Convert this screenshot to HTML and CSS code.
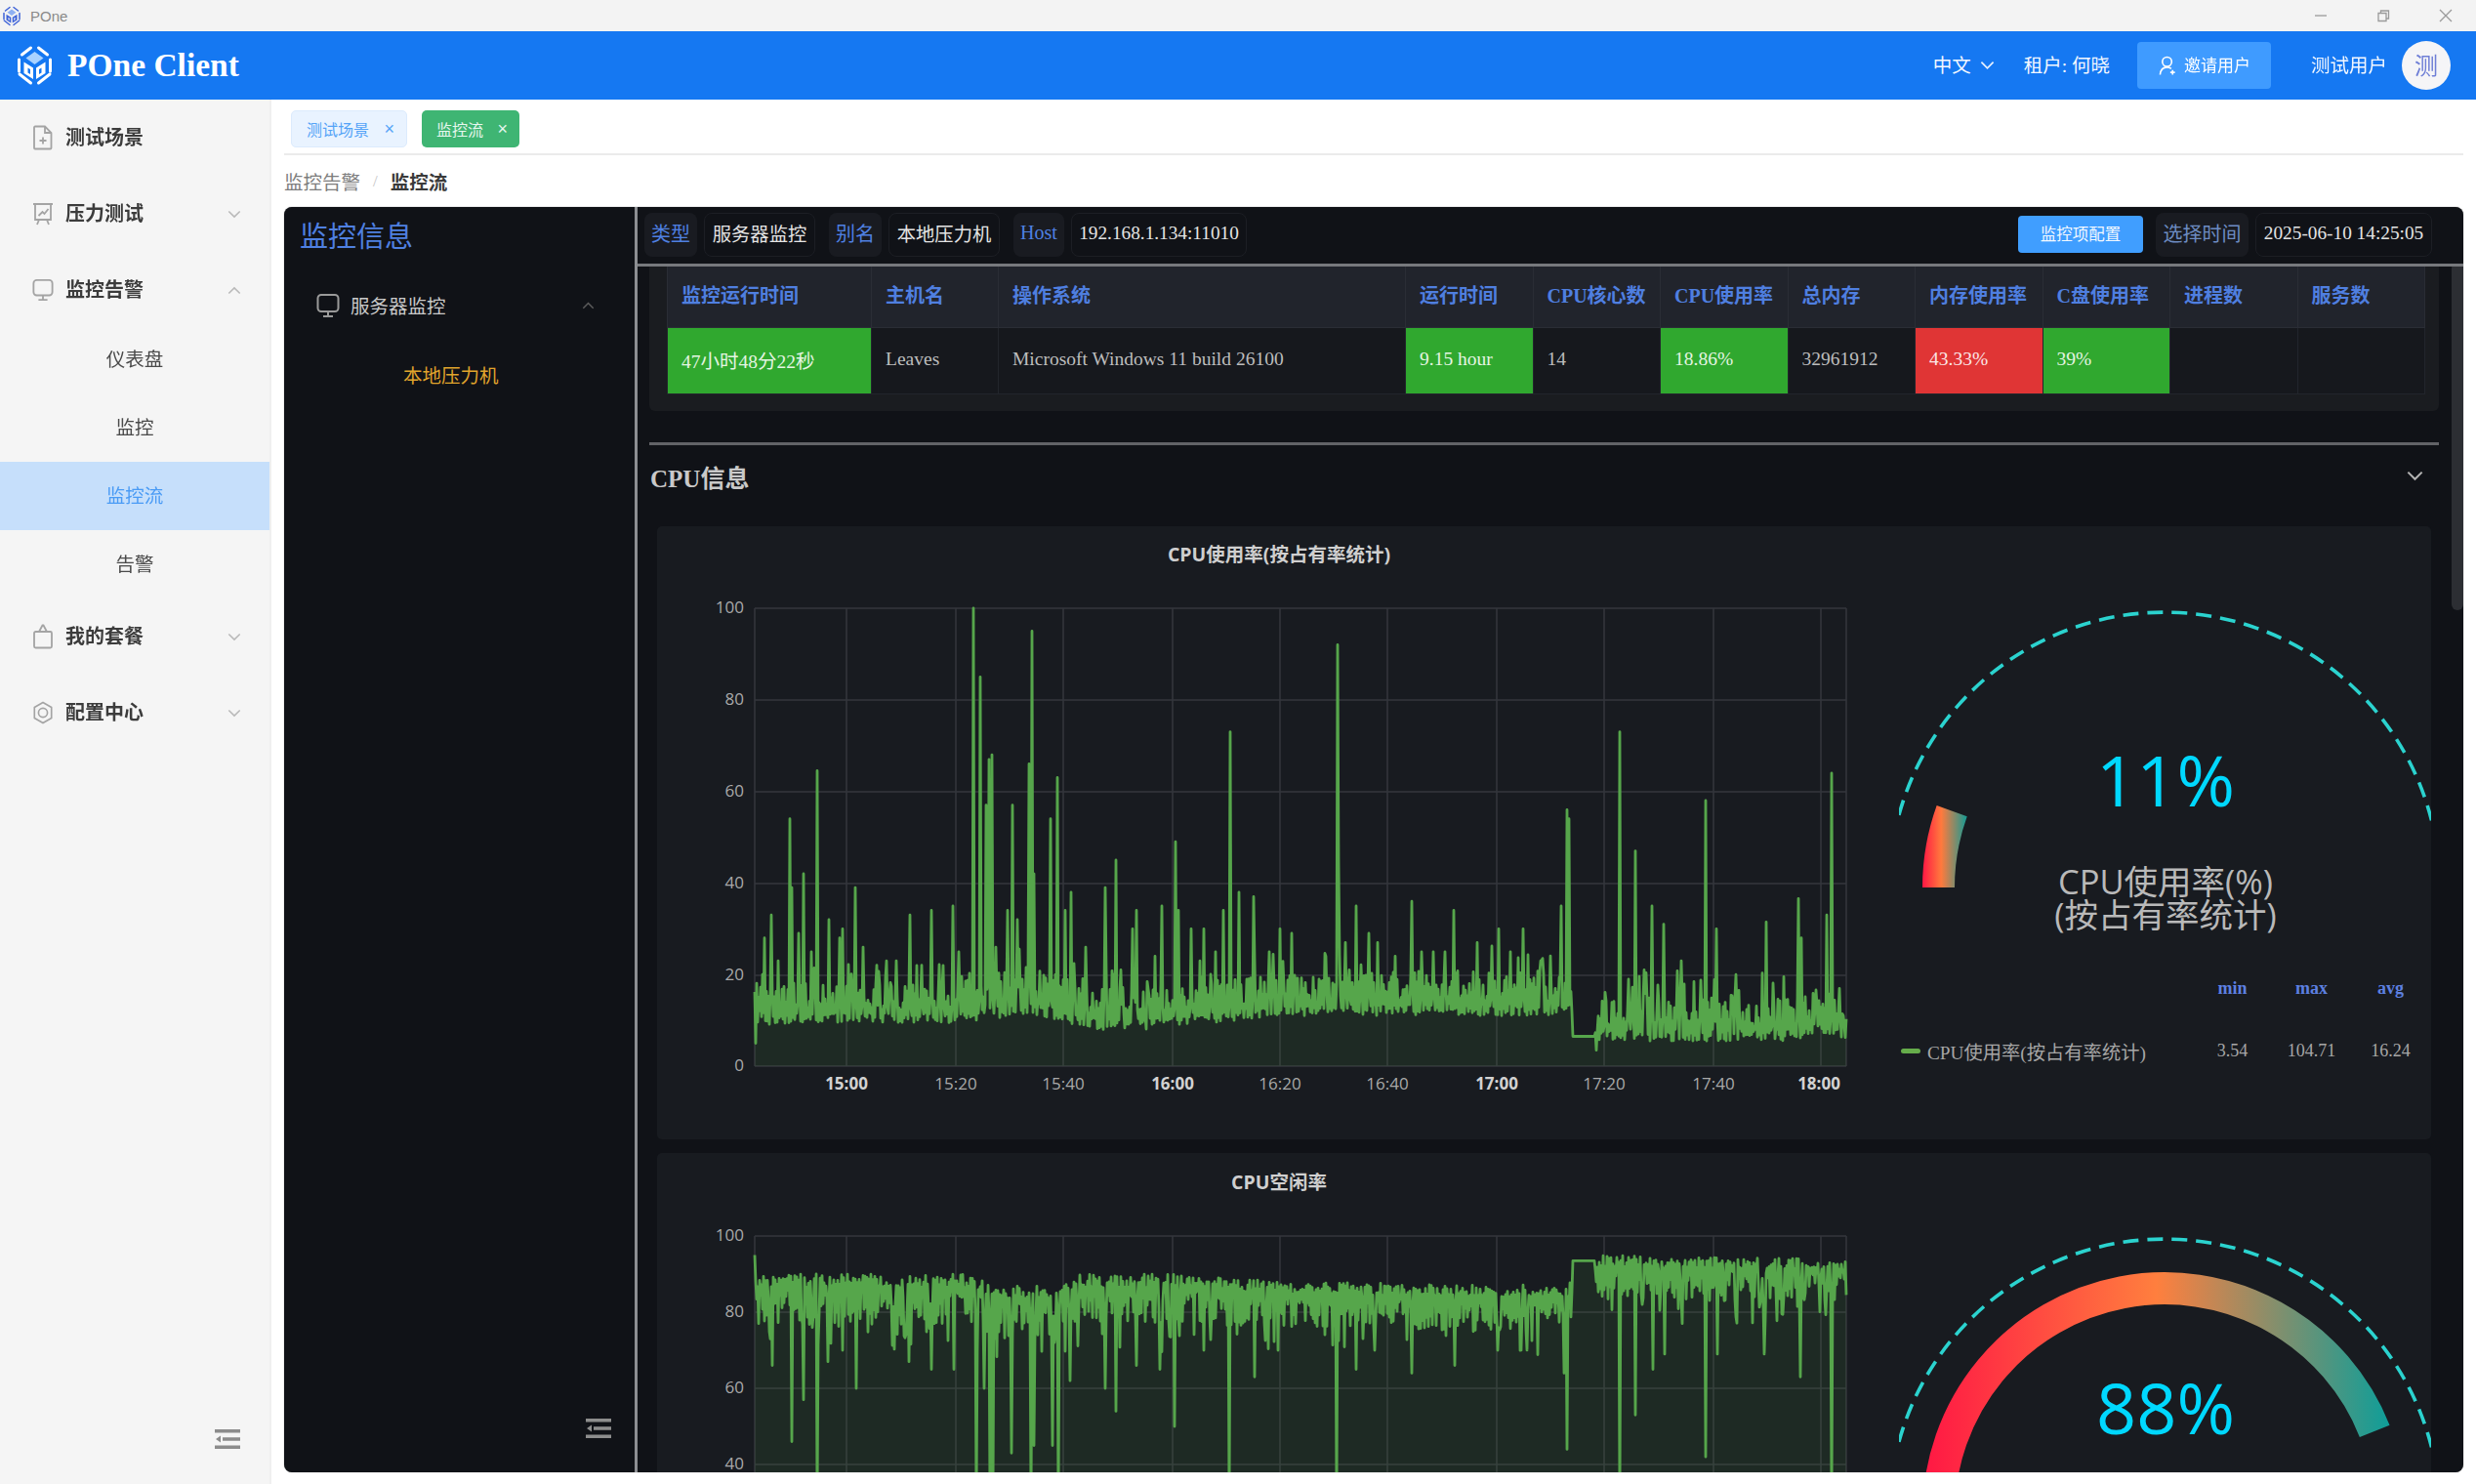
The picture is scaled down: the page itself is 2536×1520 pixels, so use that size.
FILE: index.html
```html
<!DOCTYPE html>
<html lang="zh">
<head>
<meta charset="utf-8">
<title>POne</title>
<link rel="stylesheet" href="styles.css">
</head>
<body>
<svg class="defs" width="0" height="0" aria-hidden="true">
  <defs>
    <symbol id="logo" viewBox="0 0 40 42">
      <g fill="none" stroke="currentColor" stroke-width="3" stroke-linecap="round">
        <path d="M4 27V15M4.500 30L16 39M36 27V15M35.500 30L24 39M7 10L16 3M33 10L24 3"/>
      </g>
      <path class="logo-gem" d="M20 7L29 13.500L20 20L11 13.500Z"/>
      <path fill="currentColor" d="M9 17.500L18.500 23.500V35L9 29ZM31 17.500L21.500 23.500V35L31 29Z"/>
      <path class="logo-cut" d="M13 23.500L15.500 25V30L13 28.500ZM27 23.500L24.500 25V30L27 28.500Z"/>
    </symbol>
    <symbol id="chev-down" viewBox="0 0 16 10"><path d="M1.500 1.500L8 8L14.500 1.500" fill="none" stroke="currentColor" stroke-width="1.800"/></symbol>
    <symbol id="chev-up" viewBox="0 0 16 10"><path d="M1.500 8.500L8 2L14.500 8.500" fill="none" stroke="currentColor" stroke-width="1.800"/></symbol>
    <symbol id="monitor" viewBox="0 0 24 26"><g fill="none" stroke="currentColor" stroke-width="2"><rect x="1.500" y="2" width="21" height="17" rx="3.500"/><path d="M12 19v4M7 24h10"/></g></symbol>
    <symbol id="collapse" viewBox="0 0 26 20"><path fill="currentColor" d="M0 0h26v3.500H0zM0 16.500h26V20H0zM8 8.200h18v3.600H8zM1 10l5-3.500v7z"/></symbol>
    <linearGradient id="grad-short" gradientUnits="userSpaceOnUse" x1="24" y1="0" x2="70" y2="0">
      <stop offset="0" stop-color="#ff1744"/><stop offset=".42" stop-color="#ff7a3d"/><stop offset="1" stop-color="#109c96"/>
    </linearGradient>
    <linearGradient id="grad-long" gradientUnits="userSpaceOnUse" x1="24" y1="0" x2="504" y2="0">
      <stop offset="0" stop-color="#ff1744"/><stop offset=".5" stop-color="#ff7f3e"/><stop offset="1" stop-color="#0d9e99"/>
    </linearGradient>
  </defs>
</svg>

<div class="app">
  <div class="titlebar">
    <svg class="tb-logo"><use href="#logo"/></svg>
    <span class="tb-name">POne</span>
    <div class="win-controls">
      <svg class="win-btn" viewBox="0 0 14 14"><path d="M1 7h12"/></svg>
      <svg class="win-btn" viewBox="0 0 14 14"><path d="M2 4.500h8v8H2zM4.500 4.500V2h8v8H10"/></svg>
      <svg class="win-btn" viewBox="0 0 14 14"><path d="M1 1l12 12M13 1L1 13"/></svg>
    </div>
  </div>

  <header class="topnav">
    <svg class="nav-logo"><use href="#logo"/></svg>
    <span class="brand">POne Client</span>
    <div class="nav-right">
      <span class="lang">中文</span>
      <svg class="nav-chev"><use href="#chev-down"/></svg>
      <span class="tenant">租户: 何晓</span>
      <button class="invite">
        <svg class="invite-ico" viewBox="0 0 20 22"><g fill="none" stroke="currentColor" stroke-width="1.700"><circle cx="9" cy="7" r="5"/><path d="M1.500 21c.5-5 3-8 7.500-8 2 0 3.500.5 4.500 1.500M15 16v5M12.500 18.500h5"/></g></svg>
        <span class="invite-text">邀请用户</span>
      </button>
      <span class="username">测试用户</span>
      <span class="avatar">测</span>
    </div>
  </header>

  <div class="body-row">
    <aside class="sidebar">
      <nav class="menu">
        <div class="menu-item">
          <svg class="menu-ico" viewBox="0 0 22 26"><g fill="none" stroke="currentColor" stroke-width="1.800"><path d="M3 1.500h10l6.500 6.500v15.500a1 1 0 0 1-1 1H3a1 1 0 0 1-1-1v-21a1 1 0 0 1 1-1z"/><path d="M13 1.500V8h6.500M11 12.500v7M7.500 16h7"/></g></svg>
          <span>测试场景</span>
        </div>
        <div class="menu-item">
          <svg class="menu-ico" viewBox="0 0 22 26"><g fill="none" stroke="currentColor" stroke-width="1.800"><path d="M1 3h20M3 3v16h16V3M7 19l-2 5M15 19l2 5M6.500 15l4-4 2 2 4-5"/></g></svg>
          <span>压力测试</span>
          <svg class="menu-chev"><use href="#chev-down"/></svg>
        </div>
        <div class="menu-item">
          <svg class="menu-ico"><use href="#monitor"/></svg>
          <span>监控告警</span>
          <svg class="menu-chev"><use href="#chev-up"/></svg>
        </div>
        <div class="submenu">
          <div class="sub-item">仪表盘</div>
          <div class="sub-item">监控</div>
          <div class="sub-item active">监控流</div>
          <div class="sub-item">告警</div>
        </div>
        <div class="menu-item">
          <svg class="menu-ico" viewBox="0 0 22 26"><g fill="none" stroke="currentColor" stroke-width="1.800"><rect x="2" y="8" width="18" height="16.500" rx="1.500"/><path d="M7 8l3.500-6.500h1L15 8"/></g></svg>
          <span>我的套餐</span>
          <svg class="menu-chev"><use href="#chev-down"/></svg>
        </div>
        <div class="menu-item">
          <svg class="menu-ico" viewBox="0 0 24 26"><g fill="none" stroke="currentColor" stroke-width="1.800" stroke-linejoin="round"><path d="M12 1.500l9.500 5.500v12L12 24.500 2.500 19V7z"/><circle cx="12" cy="13" r="5"/></g></svg>
          <span>配置中心</span>
          <svg class="menu-chev"><use href="#chev-down"/></svg>
        </div>
      </nav>
      <svg class="side-collapse"><use href="#collapse"/></svg>
    </aside>

    <main class="content">
      <div class="tabs">
        <span class="tab tab-idle">测试场景<i class="tab-x">×</i></span>
        <span class="tab tab-on">监控流<i class="tab-x">×</i></span>
      </div>
      <div class="crumbs">
        <span class="crumb">监控告警</span>
        <span class="crumb-sep">/</span>
        <span class="crumb-cur">监控流</span>
      </div>

      <section class="panel">
        <div class="panel-left">
          <h2 class="pl-title">监控信息</h2>
          <div class="pl-group">
            <svg class="pl-ico"><use href="#monitor"/></svg>
            <span>服务器监控</span>
            <svg class="pl-chev"><use href="#chev-up"/></svg>
          </div>
          <div class="pl-sub">本地压力机</div>
          <svg class="pl-collapse"><use href="#collapse"/></svg>
        </div>

        <div class="panel-right">
          <div class="infobar">
            <span class="pill pill-label pw-54">类型</span>
            <span class="pill pill-value pw-114">服务器监控</span>
            <span class="pill pill-label pw-54 pill-next">别名</span>
            <span class="pill pill-value pw-114">本地压力机</span>
            <span class="pill pill-label pw-52 pill-next">Host</span>
            <span class="pill pill-value pw-180">192.168.1.134:11010</span>
            <div class="infobar-right">
              <button class="cfg-btn">监控项配置</button>
              <span class="pill pill-label pw-95 pill-dim">选择时间</span>
              <span class="pill pill-value pw-181">2025-06-10 14:25:05</span>
            </div>
          </div>

          <div class="scroll">
            <div class="table-card">
              <table class="stats">
                <colgroup>
                  <col class="c1"><col class="c2"><col class="c3">
                  <col class="cn"><col class="cn"><col class="cn"><col class="cn">
                  <col class="cn"><col class="cn"><col class="cn"><col class="cn">
                </colgroup>
                <thead>
                  <tr>
                    <th>监控运行时间</th><th>主机名</th><th>操作系统</th><th>运行时间</th><th>CPU核心数</th>
                    <th>CPU使用率</th><th>总内存</th><th>内存使用率</th><th>C盘使用率</th><th>进程数</th><th>服务数</th>
                  </tr>
                </thead>
                <tbody>
                  <tr>
                    <td class="ok">47小时48分22秒</td><td>Leaves</td><td>Microsoft Windows 11 build 26100</td>
                    <td class="ok">9.15 hour</td><td>14</td><td class="ok">18.86%</td><td>32961912</td>
                    <td class="bad">43.33%</td><td class="ok">39%</td><td></td><td></td>
                  </tr>
                </tbody>
              </table>
            </div>

            <div class="rule"></div>
            <div class="section-head">
              <h3>CPU信息</h3>
              <svg class="section-chev"><use href="#chev-down"/></svg>
            </div>

            <article class="chart-card">
              <svg class="chart" viewBox="0 0 1272 628">
                <text class="ctitle" x="637" y="36">CPU使用率(按占有率统计)</text>
                <path class="grid" d="M100 84H1218M100 178H1218M100 272H1218M100 366H1218M100 460H1218M100 553H1218M100 84V553M194 84V553M306 84V553M416 84V553M528 84V553M638 84V553M748 84V553M860 84V553M970 84V553M1082 84V553M1192 84V553M1218 84V553"/>
                <path class="area" id="area-usage"/>
                <path class="line" id="line-usage"/>
                <text class="ylab" x="89" y="89">100</text>
                <text class="ylab" x="89" y="183">80</text>
                <text class="ylab" x="89" y="277">60</text>
                <text class="ylab" x="89" y="371">40</text>
                <text class="ylab" x="89" y="465">20</text>
                <text class="ylab" x="89" y="558">0</text>
                <text class="xlab strong" x="194" y="577">15:00</text>
                <text class="xlab" x="306" y="577">15:20</text>
                <text class="xlab" x="416" y="577">15:40</text>
                <text class="xlab strong" x="528" y="577">16:00</text>
                <text class="xlab" x="638" y="577">16:20</text>
                <text class="xlab" x="748" y="577">16:40</text>
                <text class="xlab strong" x="860" y="577">17:00</text>
                <text class="xlab" x="970" y="577">17:20</text>
                <text class="xlab" x="1082" y="577">17:40</text>
                <text class="xlab strong" x="1190" y="577">18:00</text>
              </svg>
              <div class="gauge-col">
                <svg class="gauge" viewBox="0 0 545 450">
                  <path class="dash" d="M-10 370A282 282 0 0 1 554 370"/>
                  <path class="band band-short" d="M40.500 370A231.500 231.500 0 0 1 54.200 291.600"/>
                  <text class="gauge-val" x="273" y="287">11%</text>
                  <text class="gauge-lab"><tspan x="273" y="377">CPU使用率(%)</tspan><tspan x="273" y="411">(按占有率统计)</tspan></text>
                </svg>
                <div class="legend">
                  <span></span><b>min</b><b>max</b><b>avg</b>
                  <span class="legend-name"><i class="swatch"></i>CPU使用率(按占有率统计)</span><span>3.54</span><span>104.71</span><span>16.24</span>
                </div>
              </div>
            </article>

            <article class="chart-card">
              <svg class="chart" viewBox="0 0 1272 628">
                <text class="ctitle" x="637" y="37">CPU空闲率</text>
                <path class="grid" d="M100 85H1218M100 163H1218M100 241H1218M100 319H1218M100 397H1218M100 475H1218M100 553H1218M100 85V553M194 85V553M306 85V553M416 85V553M528 85V553M638 85V553M748 85V553M860 85V553M970 85V553M1082 85V553M1192 85V553M1218 85V553"/>
                <path class="area" id="area-idle"/>
                <path class="line" id="line-idle"/>
                <text class="ylab" x="89" y="90">100</text>
                <text class="ylab" x="89" y="168">80</text>
                <text class="ylab" x="89" y="246">60</text>
                <text class="ylab" x="89" y="324">40</text>
              </svg>
              <div class="gauge-col">
                <svg class="gauge" viewBox="0 0 545 450">
                  <path class="dash" d="M-10 370A282 282 0 0 1 554 370"/>
                  <path class="band band-long" d="M40.500 370A231.500 231.500 0 0 1 487.200 284.800"/>
                  <text class="gauge-val" x="273" y="288">88%</text>
                </svg>
              </div>
            </article>

            <div class="scroll-thumb"></div>
          </div>
        </div>
      </section>
    </main>
  </div>
</div>
<script src="chart.js"></script>
</body>
</html>
```
FILE: styles.css
```css
* { box-sizing: border-box; }
html, body { margin: 0; height: 100%; overflow: hidden; background: #fff; }
body { font-family: "Liberation Serif", "Noto Sans CJK SC", serif; color: #333; }
.defs { position: absolute; }

.app { height: 100vh; display: flex; flex-direction: column; filter: blur(.7px); }

/* title bar */
.titlebar { height: 32px; flex: none; display: flex; align-items: center; background: #f3f3f3; padding: 0 24px 0 2px; }
.tb-logo { width: 20px; height: 21px; color: #3f63d8; --gem: #8fb0f2; --cut: #f3f3f3; }
.tb-name { margin-left: 9px; font: 15px "Liberation Sans", sans-serif; color: #8a8a8a; }
.win-controls { margin-left: auto; display: flex; gap: 50px; }
.win-btn { width: 14px; height: 14px; fill: none; stroke: #9a9a9a; stroke-width: 1.300; }

/* top navigation */
.topnav { height: 70px; flex: none; display: flex; align-items: center; background: #1578f2; color: #fff; padding: 0 26px 0 15px; }
.nav-logo { width: 41px; height: 42px; color: #fff; --gem: #a9d2ff; --cut: #1578f2; }
.logo-gem { fill: var(--gem); }
.logo-cut { fill: var(--cut); }
.brand { margin-left: 13px; font-size: 33.500px; font-weight: 700; }
.nav-right { margin-left: auto; display: flex; align-items: center; }
.lang, .tenant, .username { font-size: 19.500px; color: #f2f7ff; padding-bottom: 3px; }
.nav-chev { width: 15px; height: 10px; margin-left: 9px; color: #e6f0ff; }
.tenant { margin-left: 30px; }
.invite { margin-left: 28.500px; width: 137px; height: 48px; border: 0; border-radius: 4px; background: #3f9bff; color: #fff; display: flex; align-items: center; justify-content: center; gap: 7px; font: 17px "Liberation Serif", "Noto Sans CJK SC", serif; padding: 0; }
.invite-text { padding-bottom: 3px; }
.invite-ico { width: 19px; height: 22px; }
.username { margin-left: 40.500px; }
.avatar { margin-left: 15px; width: 50px; height: 50px; border-radius: 50%; background: #f5f5f7; color: #6f7fd6; display: flex; align-items: center; justify-content: center; font-size: 24px; padding-bottom: 3px; }

.body-row { flex: 1; min-height: 0; display: flex; }

/* sidebar */
.sidebar { width: 278px; flex: none; display: flex; flex-direction: column; background: #f5f5f5; border-right: 2px solid #efefef; }
.menu { display: flex; flex-direction: column; }
.menu-item { height: 78px; display: flex; align-items: center; padding: 0 29px 0 33px; font-size: 20px; font-weight: 700; color: #3c3c3c; }
.menu-item span { padding-bottom: 3px; }
.menu-ico { width: 22px; height: 26px; margin-right: 12px; color: #a4a4a4; }
.menu-chev { width: 14px; height: 9px; margin-left: auto; color: #b9b9b9; }
.submenu { margin-top: -3px; }
.sub-item { height: 70px; display: flex; align-items: center; justify-content: center; font-size: 19.500px; color: #4a4a4a; padding-bottom: 3px; }
.sub-item.active { background: #c6dffb; color: #4a9bf5; }
.side-collapse { width: 26px; height: 20px; margin: auto 30px 36px auto; color: #8c8c8c; }

/* content */
.content { flex: 1; min-width: 0; display: flex; flex-direction: column; padding: 0 13px 12px 13px; background: #fff; }
.tabs { height: 57px; flex: none; display: flex; gap: 15px; padding: 11px 0 0 7px; border-bottom: 2px solid #ebebeb; }
.tab { height: 38px; display: flex; align-items: center; padding: 0 12px 0 15px; border-radius: 5px; font-size: 16px; }
.tab-idle { width: 119px; background: #e9f3ff; border: 1px solid #dcebfd; color: #54a3f7; }
.tab-on { width: 100px; background: #3fb573; color: #e6f7ee; }
.tab-x { margin-left: auto; font-style: normal; font-size: 18px; font-family: "Liberation Sans", sans-serif; }
.crumbs { height: 53px; flex: none; display: flex; align-items: center; font-size: 19.500px; }
.crumb { color: #7d7d7d; }
.crumb-sep { margin: 0 13px; color: #c6c6c6; font-size: 17px; }
.crumb-cur { font-weight: 700; color: #3a3a3a; }

/* dark panel */
.panel { flex: 1; min-height: 0; display: flex; background: #101217; border-radius: 8px; overflow: hidden; box-shadow: 0 0 1px #555; }
.panel-left { width: 359px; flex: none; display: flex; flex-direction: column; }
.pl-title { margin: 0; height: 66px; padding: 17px 0 0 16px; font-size: 29px; line-height: 29px; font-weight: 400; color: #4f80e1; }
.pl-group { height: 72px; display: flex; align-items: center; padding: 0 41px 3px 33px; font-size: 19.500px; color: #c9c9c9; }
.pl-ico { width: 24px; height: 26px; margin-right: 11px; color: #9a9a9a; }
.pl-chev { width: 13px; height: 8px; margin-left: auto; color: #5c5c5c; }
.pl-sub { height: 72px; display: flex; align-items: center; padding: 0 0 5px 122px; font-size: 19.500px; color: #e0a42c; }
.pl-collapse { width: 26px; height: 22px; margin: auto 24px 34px auto; color: #8d8d8d; }

.panel-right { flex: 1; min-width: 0; display: flex; flex-direction: column; border-left: 3px solid #8c8e92; }
.infobar { height: 61px; flex: none; display: flex; align-items: center; padding: 0 32px 2px 7px; border-bottom: 3px solid #77797d; gap: 7px; }
.pill { height: 45px; display: flex; align-items: center; justify-content: center; border-radius: 8px; font-size: 19.500px; white-space: nowrap; padding-bottom: 3px; }
.pill-label { background: #191b21; color: #4f80e1; font-size: 20px; }
.pill-value { border: 1px solid #1c1e24; color: #e4e4e4; font-size: 19.300px; }
.pill-next { margin-left: 7px; }
.pill-dim { color: #6d8cc2; }
.pw-52 { width: 52px; }
.pw-54 { width: 54px; }
.pw-95 { width: 95px; }
.pw-114 { width: 114px; }
.pw-180 { width: 180px; }
.pw-181 { width: 181px; }
.infobar-right { margin-left: auto; display: flex; align-items: center; gap: 7px; }
.cfg-btn { width: 128px; height: 38px; margin-right: 6px; border: 0; border-radius: 4px; background: #409eff; color: #f2f8ff; font: 16.500px "Liberation Serif", "Noto Sans CJK SC", serif; padding: 0 0 2px; }

.scroll { flex: 1; min-height: 0; position: relative; overflow: hidden; padding: 0 25px 0 12px; }
.scroll-thumb { position: absolute; top: -4px; right: 0; width: 12px; height: 356px; border-radius: 6px; background: #2c2e33; }

.table-card { background: #1a1c20; border-radius: 0 0 6px 6px; padding: 0 15px 17px 18px; }
.stats { width: 1800px; table-layout: fixed; border-collapse: collapse; font-size: 19.500px; }
.c1 { width: 209px; }
.c2 { width: 130px; }
.c3 { width: 417px; }
.cn { width: 130.500px; }
.stats th { height: 62px; padding: 0 14px 5px; text-align: left; font-size: 20px; font-weight: 700; white-space: nowrap; color: #4f7fe0; background: #21242c; border: 1px solid #2a2d35; border-top: 0; }
.stats td { height: 68px; padding: 0 14px 2px; color: #bdbdbd; background: #16181d; border: 1px solid #22252c; white-space: nowrap; }
.stats td.ok { background: #30a82f; color: #e4f5e2; }
.stats td.bad { background: #e03535; color: #fbe6e6; }

.rule { height: 3px; margin-top: 32px; background: #626367; }
.section-head { height: 64px; margin-bottom: 19px; display: flex; align-items: center; justify-content: space-between; padding: 0 15px 0 1px; }
.section-head h3 { margin: 0; font-size: 25px; font-weight: 700; color: #c9c9c9; }
.section-chev { width: 19px; height: 11px; color: #b4b4b4; }

/* chart cards */
.chart-card { display: flex; height: 628px; margin: 0 8px 14px; background: #181b20; border-radius: 5px; overflow: hidden; }
.chart { width: 1272px; height: 628px; flex: none; }
.ctitle { font: 700 19.500px "Open Sans", "Noto Sans CJK SC", sans-serif; fill: #cfcfcf; text-anchor: middle; }
.grid { fill: none; stroke: #34373c; stroke-width: 1.500; }
.area { fill: #56a64b; fill-opacity: .11; stroke: none; }
.line { fill: none; stroke: #56a64b; stroke-width: 2.800; stroke-linejoin: round; }
.ylab { font: 17px "Open Sans", sans-serif; fill: #a9a9a9; text-anchor: end; }
.xlab { font: 17px "Open Sans", sans-serif; fill: #a9a9a9; text-anchor: middle; }
.xlab.strong { font-weight: 700; fill: #d2d2d2; }

.gauge-col { width: 545px; flex: none; display: flex; flex-direction: column; }
.gauge { width: 545px; height: 450px; flex: none; }
.dash { fill: none; stroke: #2bd3cf; stroke-width: 3.600; stroke-dasharray: 16 9; }
.band { fill: none; stroke-width: 33; }
.band-short { stroke: url(#grad-short); }
.band-long { stroke: url(#grad-long); }
.gauge-val { font: 72px "Open Sans", sans-serif; fill: #00d8ff; text-anchor: middle; }
.gauge-lab { font: 34.500px "Open Sans", "Noto Sans CJK SC", sans-serif; fill: #b9b9b9; text-anchor: middle; }

.legend { display: grid; grid-template-columns: 301px 81px 81px 81px; grid-auto-rows: 44px; row-gap: 20px; margin-top: 2px; align-items: center; justify-items: center; font-size: 18px; color: #a6a6a6; }
.legend b { color: #5d80e0; }
.legend-name { justify-self: start; display: flex; align-items: center; white-space: nowrap; font-size: 19.300px; padding-left: 2px; }
.swatch { width: 20px; height: 5px; border-radius: 3px; background: #66ad4b; margin-right: 7px; }
```
FILE: chart.js
```js
(function () {
  function rng(seed) {
    return function () {
      seed = (seed * 1664525 + 1013904223) >>> 0;
      return seed / 4294967296;
    };
  }

  // Envelope points: [x, smooth edge, jagged edge]
  function envAt(points, x) {
    for (var i = 1; i < points.length; i++) {
      if (x <= points[i][0]) {
        var a = points[i - 1], b = points[i];
        var t = (x - a[0]) / (b[0] - a[0] || 1);
        return [a[1] + (b[1] - a[1]) * t, a[2] + (b[2] - a[2]) * t];
      }
    }
    var last = points[points.length - 1];
    return [last[1], last[2]];
  }

  function draw(cfg) {
    var rand = rng(cfg.seed);
    var values = [];
    for (var x = 100; x <= 1218; x++) {
      var e = envAt(cfg.env, x);
      var r = rand();
      var t = x % 2 ? r * 0.3 : 0.35 + 0.75 * r;
      var v = e[0] + t * (e[1] - e[0]);
      if (rand() < 0.08) v = e[1] + (e[1] - e[0]) * 0.7 * rand();
      values.push(v);
    }
    cfg.flats.forEach(function (f) {
      for (var x = f[0]; x <= f[1]; x++) values[x - 100] = f[2];
    });
    cfg.spikes.forEach(function (s) {
      var i = Math.max(0, Math.min(values.length - 1, Math.round(s[0]) - 100));
      values[i] = s[1];
    });
    var line = "";
    values.forEach(function (v, i) {
      line += (i ? "L" : "M") + (100 + i) + " " + (cfg.y(v)).toFixed(1);
    });
    document.getElementById("line-" + cfg.id).setAttribute("d", line);
    document.getElementById("area-" + cfg.id).setAttribute("d", line + "L1218 553L100 553Z");
  }

  function fromA(p) { return [p[0] / 2.529 - 3, p[1]]; }
  function fromB(p) { return [607 + p[0] / 2.45, p[1]]; }
  function fromC(p) { return [p[0] / 1.244 - 3, p[1]]; }

  var usageA = [[262,5],[285,28],[303,33],[322,23],[352,54],[357,39],[375,29],[388,42],[407,25],[422,64.5],[453,32],[480,28],[488,30],[522,39],[540,26],[602,23],[628,23],[662,33],[680,22],[718,34],[748,22],[775,35],[790,25],[828,100],[845,85],[860,57],[868,67],[875,68],[885,26],[915,34],[927,57],[940,32],[970,66],[978,95],[985,42],[1027,54],[1044,63],[1065,34],[1080,38],[1117,26],[1168,39],[1195,45],[1210,21],[1238,30],[1250,34],[1297,24],[1315,35],[1350,49],[1358,34],[1392,30],[1425,30],[1455,25],[1475,34],[1492,73],[1515,38]];
  var usageB = [[10,37],[50,25],[77,30],[105,29],[190,24],[220,92],[224,45],[240,27],[267,35],[300,29],[320,27],[365,24],[407,36],[430,25],[460,25],[490,25],[511,34],[572,27],[625,30],[655,25],[687,30],[730,23],[782,35],[796,56],[800,54],[928,73],[968,47],[990,21],[1010,35],[1040,31],[1083,23],[1143,58],[1172,30],[1220,20],[1295,31.5],[1340,19.5],[1378,36.6],[1385,28],[1447,33],[1460,64],[1480,17]];

  draw({
    id: "usage",
    seed: 20250610,
    y: function (v) { return 553 - v * 4.69; },
    env: [[100,9,20],[150,9.5,17],[300,9.5,17],[340,10,19],[380,11.5,21],[410,10,19],[450,8,16],[500,8,16],[530,9,18],[600,10,19],[650,11,19],[800,11,20],[900,11,20],[936,11.5,19],[962,5.5,14],[1100,5.5,15],[1150,5.5,14],[1200,7,16],[1218,5,10]],
    flats: [[938,960,6.5]],
    spikes: usageA.map(fromA).concat(usageB.map(fromB)).concat([[962,3.5]])
  });

  var idle = [[128,95],[150,66],[175,46],[190,57],[208,30],[222,67],[240,70],[257,60],[325,67],[353,65],[382,65],[410,30],[420,60],[428,30],[432,30],[455,43],[480,30],[484,45],[507,45],[515,30],[530,62],[575,60],[588,54],[615,66],[645,65],[663,50],[700,70],[733,30],[765,63],[795,70],[870,30],[895,65],[918,70],[965,64],[1020,66],[1075,70],[1105,70],[1160,64],[1163,44],[1230,30],[1250,53],[1272,65],[1288,69],[1310,77],[1340,42],[1355,69],[1415,69],[1460,63],[1500,30]];

  draw({
    id: "idle",
    seed: 77120,
    y: function (v) { return 85 + (100 - v) * 3.9; },
    env: [[100,90,78],[320,90,78],[345,87,74],[400,87,74],[431,90,78],[540,90,78],[640,88,77],[932,87,76],[965,95,84],[1218,94,84]],
    flats: [[938,960,93.5]],
    spikes: idle.map(fromC)
  });
})();
```
